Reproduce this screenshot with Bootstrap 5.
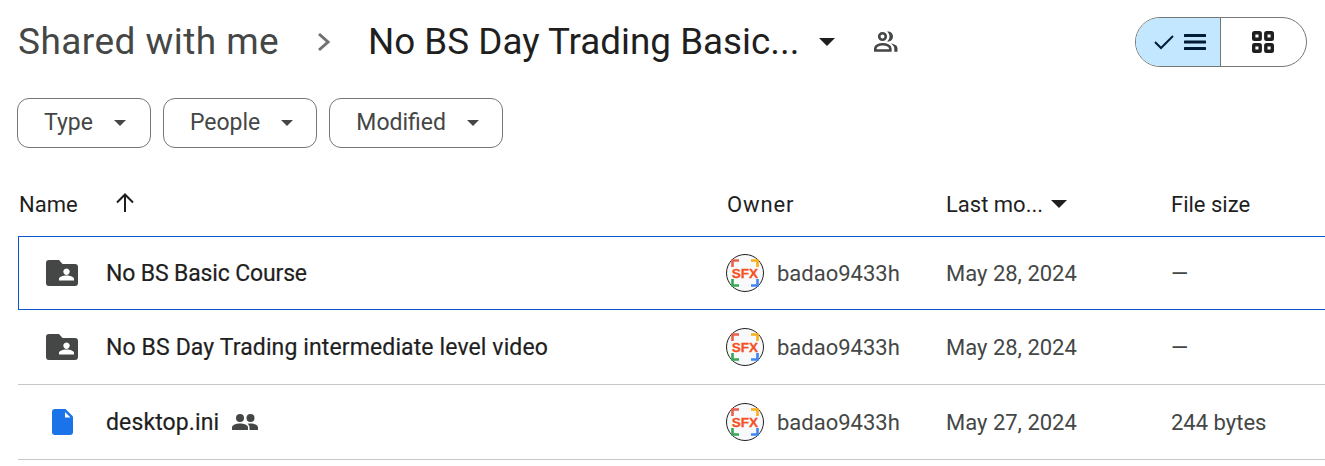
<!doctype html>
<html lang="en"><head><meta charset="utf-8"><title>Shared with me</title>
<link rel="stylesheet" href="https://cdn.jsdelivr.net/npm/bootstrap@5.3.0/dist/css/bootstrap.min.css">
<style>
html,body{height:466px;overflow:hidden;background:#fff}
body{font-family:Roboto,"Liberation Sans",sans-serif;color:#1f1f1f}
.page-wrap{padding-left:18px;width:1325px}
.crumbs{height:84px;padding-right:18px}
.crumb-root{font-size:37px;color:#444746;line-height:44px;width:262px;letter-spacing:.45px}
.crumb-sep{width:20px;margin:0 33px 0 35px}
.crumb-cur{font-size:36.8px;color:#1f1f1f;line-height:44px;width:430px;white-space:nowrap}
.crumb-caret{margin-left:20px;margin-right:37px}
.view-toggle{width:172px;height:50px;border:1px solid #747775;border-radius:25px;overflow:hidden;margin-top:-1px}
.view-on{width:85px;background:#c2e7ff;border-right:1px solid #747775;padding-left:3px;gap:9px}
.view-off{flex:1;padding-right:2px}
.chips{height:50px;margin-top:14px;gap:12px;margin-left:-1px}
.chip-btn{height:50px;border:1px solid #747775;border-radius:12px;font-size:23px;color:#444746;background:#fff;padding:1px 23px 0 26px;gap:21px}
.chip-first{padding-right:24px}
.chip-icon{margin-top:-1px}
.head-row{height:89px;font-size:22px;padding-top:24px;border-bottom:1px solid #c7c7c7;color:#1f1f1f}
.col-name{width:709px;flex:none}
.col-owner{width:219px;flex:none}
.col-mod{width:225px;flex:none}
.col-size{flex:1}
.head-row .col-name{padding-left:1px}
.head-owner{letter-spacing:.9px}
.sort-up{margin-left:36px;margin-top:-2px}
.file-row{height:75px;border-bottom:1px solid #c7c7c7;font-size:22px;color:#444746}
.file-row.picked{height:74px;border:1px solid #0b57d0;border-right:none;margin-top:-1px}
.file-row.picked .col-name{width:708px}
.file-row.picked .file-icon{width:87px;padding-left:27px}
.file-icon{width:88px;flex:none;padding-left:28px}
.file-title{color:#1f1f1f;font-size:23px;letter-spacing:.12px;padding-top:2px;-webkit-text-stroke:.2px #1f1f1f}
.title-tight{letter-spacing:-.15px}
.col-owner .owner-avatar{margin-left:-1px}
.owner-name{margin-left:13px}
.share-ico{margin-left:13px}
.doc-ico{margin-left:6px}
</style></head>
<body>
<svg width="0" height="0" class="d-block position-absolute" aria-hidden="true">
  <defs>
    <symbol id="sfx" viewBox="0 0 38 38">
      <circle cx="19" cy="19" r="18.500" fill="#f8f9fa" stroke="#222"/>
      <path d="M6.500 13V6.500H13" fill="none" stroke="#e8604c" stroke-width="2.600"/>
      <path d="M25 6.500h6.500V13" fill="none" stroke="#fbae17" stroke-width="2.600"/>
      <path d="M6.500 25v6.500H13" fill="none" stroke="#34a853" stroke-width="2.600"/>
      <path d="M31.500 25v6.500H25" fill="none" stroke="#4285f4" stroke-width="2.600"/>
      <text x="19" y="24" text-anchor="middle" font-family="Liberation Sans" font-weight="700" font-size="13.500" fill="#f4511e" stroke="#f4511e" stroke-width=".3">SFX</text>
    </symbol>
    <symbol id="fold" viewBox="0 0 32 26">
      <path fill-rule="evenodd" d="M3 0h10l3.500 4H29a3 3 0 0 1 3 3v16a3 3 0 0 1-3 3H3a3 3 0 0 1-3-3V3a3 3 0 0 1 3-3zM20.500 8.500a3.200 3.200 0 1 0 .01 0zM13 20.500h15v-1.800c0-2-3.800-3.300-7.500-3.300s-7.500 1.300-7.500 3.300z" fill="#444746"/>
    </symbol>
    <symbol id="drop" viewBox="0 0 12 6"><path d="M0 0h12L6 6z" fill="#444746"/></symbol>
  </defs>
</svg>
<div class="page-wrap">
  <div class="crumbs d-flex align-items-center">
    <div class="crumb-root">Shared with me</div>
    <svg class="crumb-sep" width="20" height="24" viewBox="0 0 20 24"><path d="M4 4l9 8-9 8" fill="none" stroke="#6e7072" stroke-width="3"/></svg>
    <div class="crumb-cur">No BS Day Trading Basic...</div>
    <svg class="crumb-caret" width="18" height="10" viewBox="0 0 18 10"><path d="M1 1h16l-8 8z" fill="#1f1f1f"/></svg>
    <svg width="28" height="24" viewBox="0 0 28 24" fill="#444746"><circle cx="9.500" cy="6.500" r="3.300" fill="none" stroke="#444746" stroke-width="2.600"/><path d="M14 1.500c3-.5 6 1.500 6 5 0 3.500-3 5.500-6 5 1.500-1.300 2.500-3 2.500-5s-1-3.700-2.500-5z"/><path d="M2.300 20.500v-2c0-2.800 3.800-4.200 7.500-4.200s7.500 1.400 7.500 4.200v2z" fill="none" stroke="#444746" stroke-width="2.600"/><path d="M17.500 13.500c3.600.6 7 1.800 7 4.800v3.500h-3.200v-3.500c0-1.800-1.400-3.600-3.800-4.800z"/></svg>
    <div class="view-toggle d-flex ms-auto">
      <div class="view-on d-flex align-items-center justify-content-center">
        <svg width="22" height="18" viewBox="0 0 22 18"><path d="M2 9l6 6L20 3" fill="none" stroke="#001d35" stroke-width="2"/></svg>
        <svg width="22" height="18" viewBox="0 0 22 18" fill="#001d35"><rect y="1" width="22" height="3" rx=".5"/><rect y="7.500" width="22" height="3" rx=".5"/><rect y="14" width="22" height="3" rx=".5"/></svg>
      </div>
      <div class="view-off d-flex align-items-center justify-content-center">
        <svg width="22" height="22" viewBox="0 0 22 22" fill="none" stroke="#1f1f1f" stroke-width="3.400"><rect x="1.700" y="1.700" width="6.500" height="6.500" rx=".8"/><rect x="13.800" y="1.700" width="6.500" height="6.500" rx=".8"/><rect x="1.700" y="13.800" width="6.500" height="6.500" rx=".8"/><rect x="13.800" y="13.800" width="6.500" height="6.500" rx=".8"/></svg>
      </div>
    </div>
  </div>

  <div class="chips d-flex">
    <div class="chip-btn chip-first d-flex align-items-center">Type<svg class="chip-icon" width="12" height="6"><use href="#drop"/></svg></div>
    <div class="chip-btn d-flex align-items-center">People<svg class="chip-icon" width="12" height="6"><use href="#drop"/></svg></div>
    <div class="chip-btn d-flex align-items-center">Modified<svg class="chip-icon" width="12" height="6"><use href="#drop"/></svg></div>
  </div>

  <div class="head-row d-flex align-items-center">
    <div class="col-name d-flex align-items-center">Name
      <svg class="sort-up" width="22" height="22" viewBox="0 0 22 22"><path d="M11 20V3M3 10.500l8-8 8 8" fill="none" stroke="#1f1f1f" stroke-width="2"/></svg>
    </div>
    <div class="col-owner head-owner">Owner</div>
    <div class="col-mod d-flex align-items-center gap-2">Last mo...<svg width="16" height="8" viewBox="0 0 16 8"><path d="M0 0h16L8 8z" fill="#1f1f1f"/></svg></div>
    <div class="col-size">File size</div>
  </div>

  <div class="file-row picked d-flex align-items-center">
    <div class="col-name d-flex align-items-center">
      <div class="file-icon"><svg class="d-block" width="32" height="26"><use href="#fold"/></svg></div>
      <div class="file-title title-tight">No BS Basic Course</div>
    </div>
    <div class="col-owner d-flex align-items-center">
      <svg class="owner-avatar" width="38" height="38"><use href="#sfx"/></svg>
      <span class="owner-name">badao9433h</span>
    </div>
    <div class="col-mod">May 28, 2024</div>
    <div class="col-size">—</div>
  </div>

  <div class="file-row d-flex align-items-center">
    <div class="col-name d-flex align-items-center">
      <div class="file-icon"><svg class="d-block" width="32" height="26"><use href="#fold"/></svg></div>
      <div class="file-title">No BS Day Trading intermediate level video</div>
    </div>
    <div class="col-owner d-flex align-items-center">
      <svg class="owner-avatar" width="38" height="38"><use href="#sfx"/></svg>
      <span class="owner-name">badao9433h</span>
    </div>
    <div class="col-mod">May 28, 2024</div>
    <div class="col-size">—</div>
  </div>

  <div class="file-row d-flex align-items-center">
    <div class="col-name d-flex align-items-center">
      <div class="file-icon"><svg class="d-block doc-ico" width="21" height="26" viewBox="0 0 21 26"><path d="M3 0h10.500L21 7.500V23a3 3 0 0 1-3 3H3a3 3 0 0 1-3-3V3a3 3 0 0 1 3-3z" fill="#1a73e8"/><path d="M13 3v5.500h5.500z" fill="#fff"/></svg></div>
      <div class="file-title">desktop.ini</div>
      <svg class="share-ico" width="26" height="16" viewBox="0 0 26 16" fill="#444746"><circle cx="8" cy="4" r="4"/><circle cx="18.500" cy="4" r="4"/><path d="M0 16v-2.500C0 10.800 4.500 9.500 8 9.500s8 1.300 8 4V16z"/><path d="M17.500 16v-2.500c0-1.500-.7-2.800-2-3.700 1-.2 2-.3 3-.3 3.500 0 7.500 1.300 7.500 4V16z"/></svg>
    </div>
    <div class="col-owner d-flex align-items-center">
      <svg class="owner-avatar" width="38" height="38"><use href="#sfx"/></svg>
      <span class="owner-name">badao9433h</span>
    </div>
    <div class="col-mod">May 27, 2024</div>
    <div class="col-size">244 bytes</div>
  </div>
</div>
<script src="https://cdn.jsdelivr.net/npm/bootstrap@5.3.0/dist/js/bootstrap.bundle.min.js"></script>
</body></html>
